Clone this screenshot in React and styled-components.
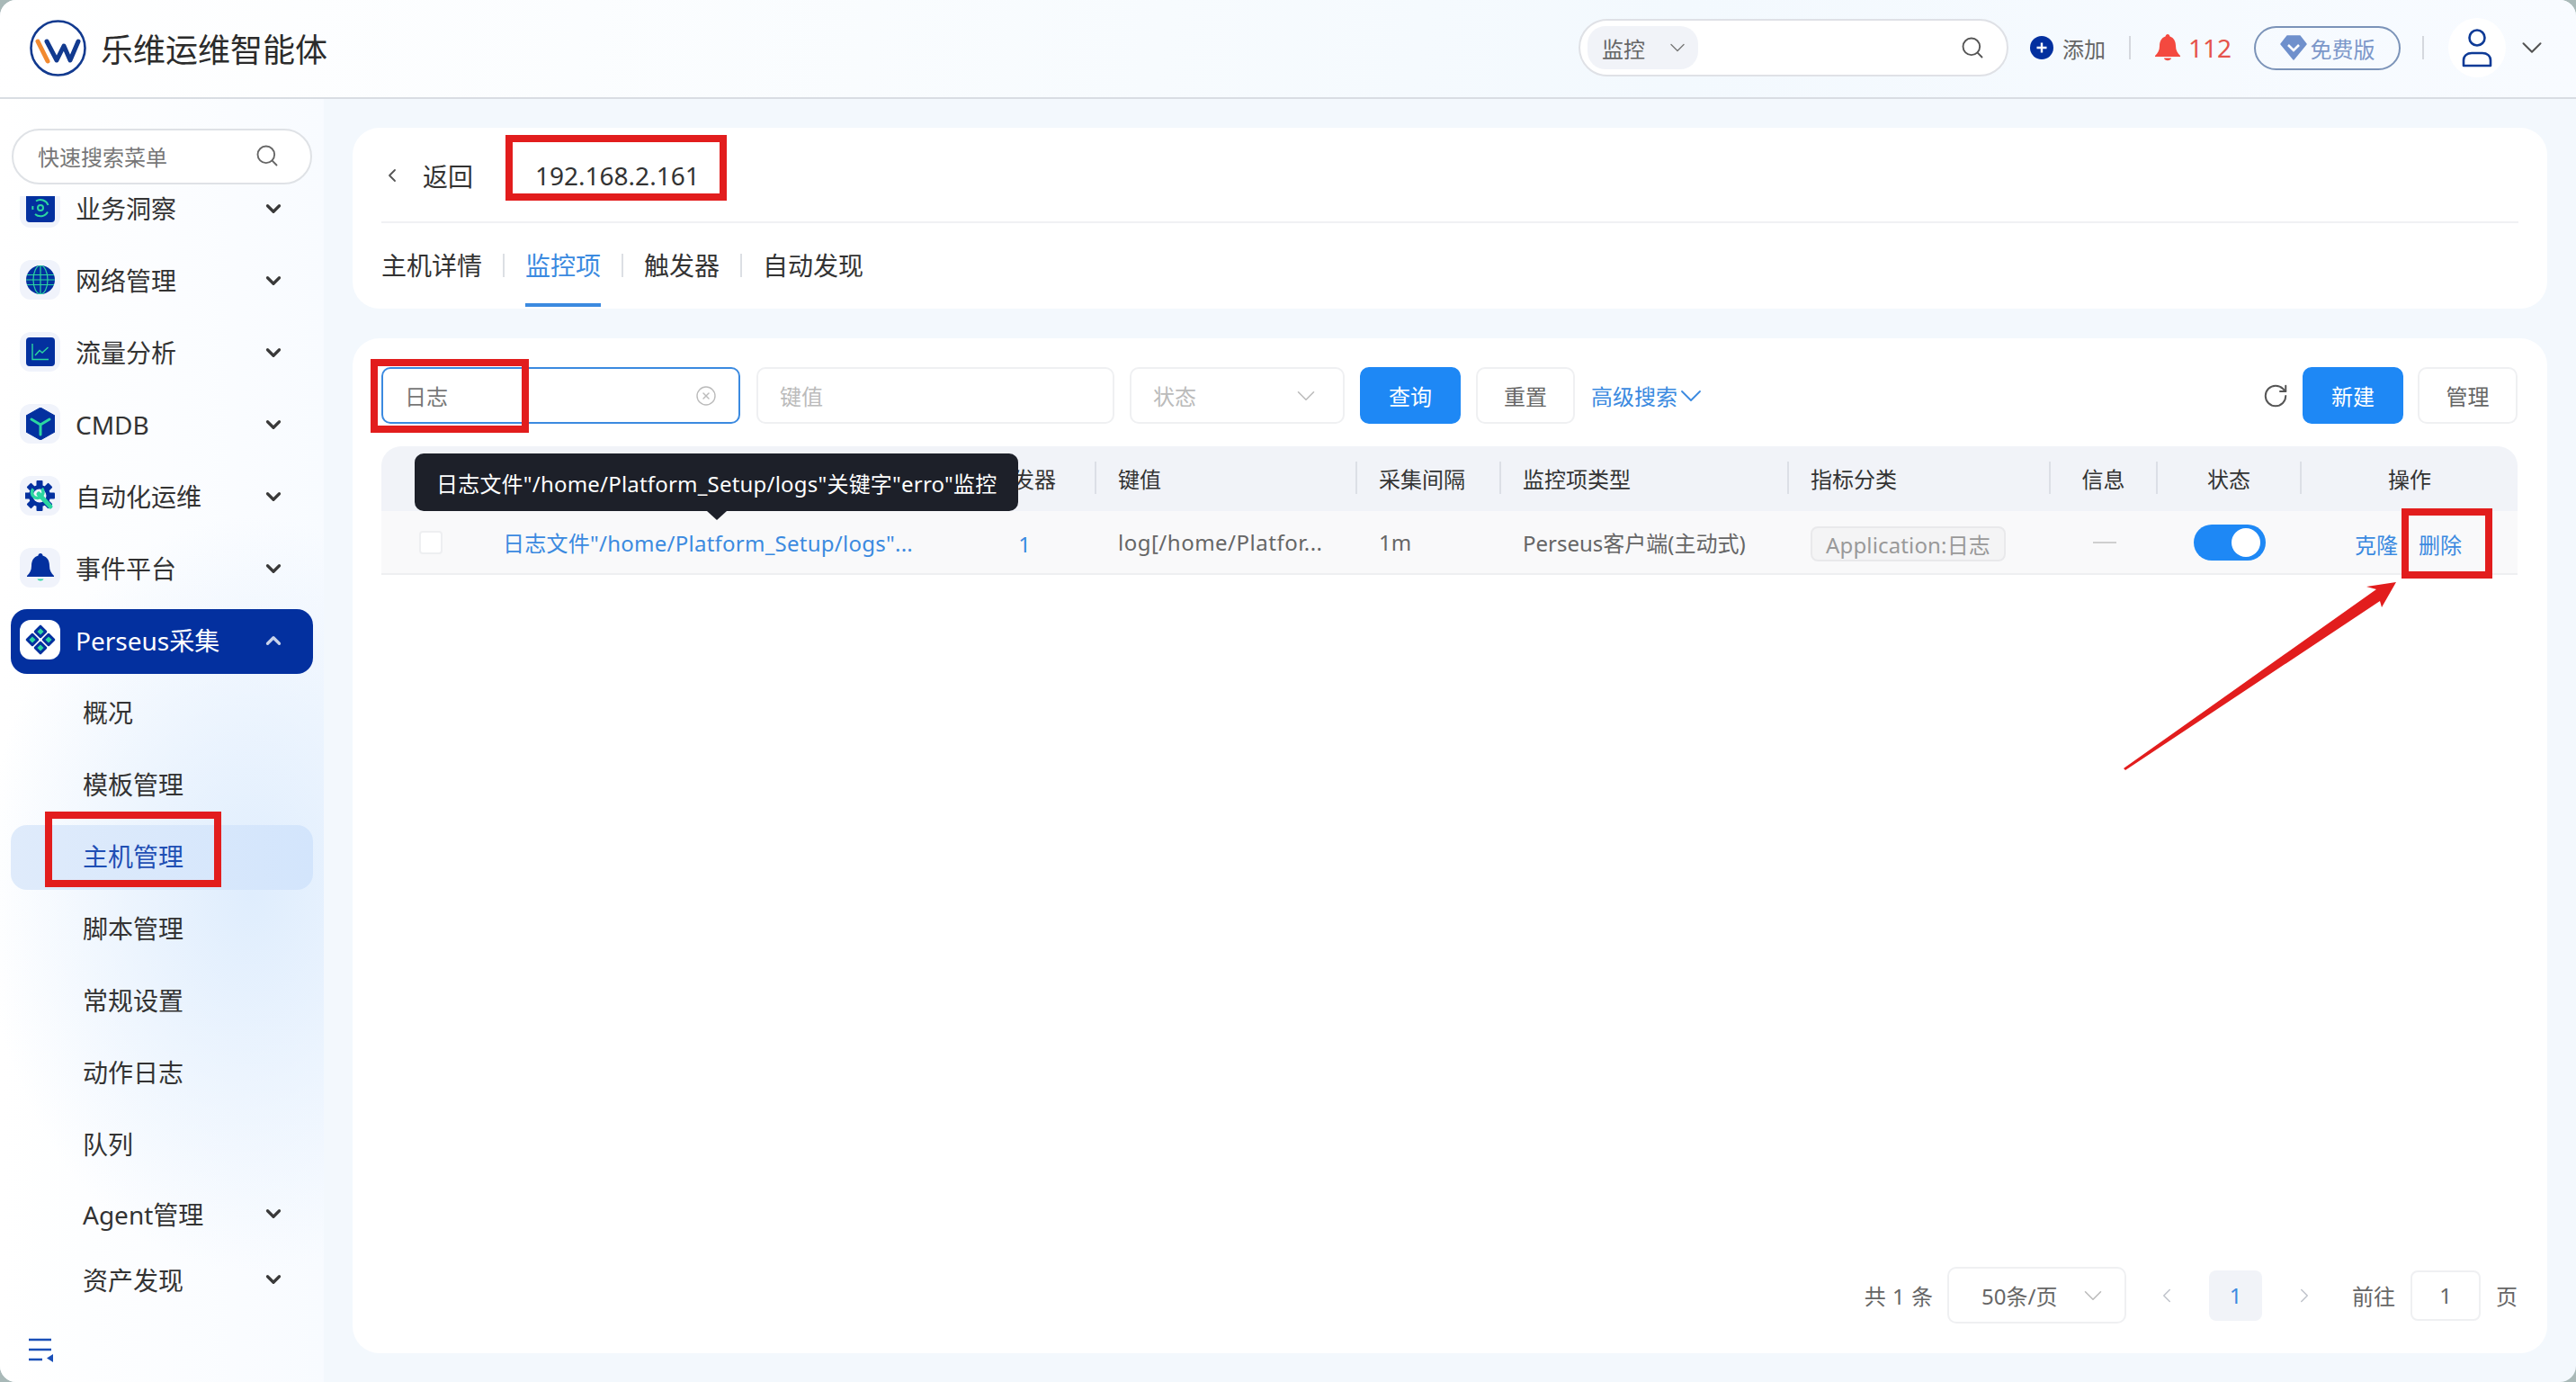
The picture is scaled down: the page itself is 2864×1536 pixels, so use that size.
import React from "react";
import styled, { createGlobalStyle } from "styled-components";
import { ChevronDown, ChevronUp, ChevronLeft, ChevronRight, Search, CircleX, RotateCw } from "lucide-react";

const NAVY = "#03309f";
const GREEN = "#2bd6a0";
const BLUE = "#1e88f5";

const Global = createGlobalStyle`
  html, body { margin: 0; padding: 0; background: #a9b9b8; }
  * { box-sizing: border-box; }
  body { font-family: "Noto Sans", "Noto Sans CJK SC", sans-serif; }
`;

const Page = styled.div`
  position: relative;
  width: 2864px;
  height: 1536px;
  display: flex;
  flex-direction: column;
  overflow: hidden;
  border-radius: 18px;
  background: #f3f8fd;
  color: #333;
`;

/* top bar */
const Header = styled.header`
  height: 110px;
  flex: none;
  display: flex;
  align-items: center;
  padding: 0 30px 2px 33px;
  border-bottom: 2px solid #d9dde3;
  background: linear-gradient(100deg, #ffffff 0%, #f7fbfe 45%, #f3f9fe 65%, #f8fbff 100%);
`;
const Brand = styled.div`
  display: flex;
  align-items: center;
  gap: 16px;
  font-size: 36px;
  color: #2b2b2b;
`;
const HeaderRight = styled.div`
  margin-left: auto;
  display: flex;
  align-items: center;
`;
const GlobalSearch = styled.div`
  width: 478px;
  height: 64px;
  display: flex;
  align-items: center;
  padding: 0 24px 0 8px;
  border: 2px solid #dfe1e6;
  border-radius: 32px;
  background: #fff;
  color: #555;
`;
const ScopePill = styled.div`
  width: 123px;
  height: 48px;
  display: flex;
  align-items: center;
  padding: 0 9px 0 16px;
  justify-content: space-between;
  border-radius: 20px;
  background: #f1f3f8;
  font-size: 24px;
  color: #666;
`;
const SearchEnd = styled.span`
  margin-left: auto;
  display: flex;
`;
const AddLink = styled.div`
  margin-left: 24px;
  display: flex;
  align-items: center;
  gap: 10px;
  font-size: 24px;
  color: #666;
`;
const VLine = styled.span`
  width: 2px;
  height: 26px;
  margin: 0 ${(p) => p.$gap || 24}px;
  background: #d5d8de;
`;
const Alarm = styled.div`
  display: flex;
  align-items: center;
  gap: 8px;
  font-size: 28px;
  color: #e5534b;
`;
const FreeBadge = styled.div`
  width: 163px;
  height: 49px;
  margin-left: 25px;
  display: flex;
  align-items: center;
  justify-content: center;
  gap: 4px;
  border: 2px solid #7b93b8;
  border-radius: 25px;
  font-size: 24px;
  color: #7c97c9;
`;
const Avatar = styled.div`
  width: 64px;
  height: 66px;
  margin-left: 3px;
  display: flex;
  align-items: center;
  justify-content: center;
  border-radius: 50%;
  background: #fff;
`;
const AvatarCaret = styled.span`
  margin-left: 10px;
  display: flex;
`;

/* layout */
const Body = styled.div`
  flex: 1;
  min-height: 0;
  display: flex;
`;
const Sidebar = styled.aside`
  width: 360px;
  flex: none;
  display: flex;
  flex-direction: column;
  padding-top: 33px;
  background:
    radial-gradient(ellipse 300px 420px at 78% 62%, #dfedfd 0%, rgba(223, 237, 253, 0) 100%),
    linear-gradient(90deg, #ffffff 0%, #f8fbff 100%);
`;
const MenuSearch = styled.div`
  width: 334px;
  height: 62px;
  flex: none;
  margin-left: 13px;
  display: flex;
  align-items: center;
  justify-content: space-between;
  padding: 0 34px 2px 27px;
  border: 2px solid #dfe2e6;
  border-radius: 31px;
  background: #fff;
  font-size: 24px;
  color: #777;
`;
const MenuViewport = styled.nav`
  flex: 1;
  min-height: 0;
  margin-top: 13px;
  overflow: hidden;
`;
const MenuList = styled.div`
  margin-top: -21px;
  padding-left: 12px;
  width: 348px;
`;
const MenuItem = styled.div`
  height: 72px;
  margin-bottom: 8px;
  display: flex;
  align-items: center;
  padding: 0 31px 3px 10px;
  border-radius: 18px;
  font-size: 28px;
  line-height: 24px;
  color: ${(p) => (p.$active ? "#fff" : "#333")};
  background: ${(p) => (p.$active ? NAVY : "transparent")};
`;
const IconTile = styled.span`
  width: 45px;
  height: 44px;
  flex: none;
  margin: -1px 17px 0 0;
  display: flex;
  align-items: center;
  justify-content: center;
  border-radius: 12px;
  background: ${(p) => (p.$white ? "#fff" : "#f0f3fb")};
`;
const MenuCaret = styled.span`
  margin-left: auto;
  display: flex;
  color: ${(p) => (p.$active ? "#c9d3ea" : "#3a3a3a")};
`;
const SubItem = styled.div`
  height: 72px;
  margin-bottom: ${(p) => p.$bottom ?? 8}px;
  display: flex;
  align-items: center;
  padding: 0 31px 5px 80px;
  border-radius: 18px;
  font-size: 28px;
  color: ${(p) => (p.$active ? "#1f4fb4" : "#333")};
  background: ${(p) => (p.$active ? "linear-gradient(90deg, #dfebfb, #d3e5fc)" : "transparent")};
`;
const SideFooter = styled.div`
  height: 66px;
  flex: none;
  padding: 17px 0 0 32px;
`;
const Main = styled.main`
  flex: 1;
  min-width: 0;
  display: flex;
  flex-direction: column;
  gap: 33px;
  padding: 32px 32px 32px;
`;

/* detail card */
const DetailCard = styled.section`
  height: 201px;
  flex: none;
  padding: 0 32px;
  border-radius: 30px;
  background: #fff;
`;
const BackRow = styled.div`
  height: 106px;
  display: flex;
  align-items: center;
  padding-top: 2px;
  border-bottom: 2px solid #f0f1f4;
  font-size: 28px;
  color: #333;
`;
const BackIcon = styled.span`
  width: 46px;
  display: flex;
  color: #555;
`;
const HostName = styled.span`
  margin-left: 69px;
  font-size: 28px;
`;
const Tabs = styled.div`
  height: 93px;
  display: flex;
  align-items: center;
`;
const Tab = styled.div`
  height: 100%;
  display: flex;
  align-items: center;
  padding-top: 3px;
  font-size: 28px;
  color: ${(p) => (p.$active ? "#3b8ae0" : "#333")};
  border-bottom: 4px solid ${(p) => (p.$active ? "#3b8ae0" : "transparent")};
`;
const TabLine = styled.span`
  width: 2px;
  height: 26px;
  margin: 0 23px;
  background: #dcdfe4;
`;

/* list card */
const ListCard = styled.section`
  flex: 1;
  min-height: 0;
  display: flex;
  flex-direction: column;
  padding: 32px 33px 33px 32px;
  border-radius: 30px;
  background: #fff;
`;
const Toolbar = styled.div`
  display: flex;
  align-items: center;
  margin-bottom: 25px;
`;
const Field = styled.div`
  width: ${(p) => p.$w}px;
  height: 63px;
  flex: none;
  margin-right: ${(p) => p.$mr ?? 18}px;
  display: flex;
  align-items: center;
  justify-content: space-between;
  padding: 0 24px 0 24px;
  border: 2px solid ${(p) => (p.$focus ? "#3b8ae0" : "#eff0f2")};
  border-radius: 10px;
  background: #fff;
  font-size: 24px;
  color: ${(p) => (p.$focus ? "#777" : "#bbb")};
`;
const Button = styled.div`
  width: ${(p) => p.$w}px;
  height: 63px;
  flex: none;
  margin-right: ${(p) => p.$mr ?? 17}px;
  display: flex;
  align-items: center;
  justify-content: center;
  border: 2px solid ${(p) => (p.$primary ? BLUE : "#eff0f2")};
  border-radius: 10px;
  background: ${(p) => (p.$primary ? BLUE : "#fff")};
  color: ${(p) => (p.$primary ? "#fff" : "#666")};
  font-size: 24px;
`;
const AdvLink = styled.div`
  display: flex;
  align-items: center;
  font-size: 24px;
  color: #3b8ae0;
  svg {
    margin-left: -5px;
  }
`;
const RefreshBtn = styled.span`
  margin-left: auto;
  margin-right: 15px;
  display: flex;
  color: #555;
`;

const Table = styled.div`
  position: relative;
  flex: 1;
  min-height: 0;
`;
const columns = "111px 524px 160px 290px 160px 320px 291px 119px 160px 240px";
const HeadRow = styled.div`
  height: 72px;
  display: grid;
  grid-template-columns: ${columns};
  align-items: center;
  padding-bottom: 2px;
  border-radius: 22px 22px 0 0;
  background: #f1f3f8;
  font-size: 24px;
  color: #333;
`;
const HeadCell = styled.div`
  height: 36px;
  display: flex;
  align-items: center;
  justify-content: ${(p) => (p.$center ? "center" : "flex-start")};
  padding-left: ${(p) => (p.$center ? 0 : 24)}px;
  border-right: ${(p) => (p.$last ? "0" : "2px solid #dcdfe6")};
`;
const DataRow = styled.div`
  height: 71px;
  display: grid;
  grid-template-columns: ${columns};
  align-items: center;
  border-bottom: 2px solid #eeeff1;
  background: #f9f9fa;
  font-size: 24px;
  color: #666;
`;
const Cell = styled.div`
  display: flex;
  align-items: center;
  justify-content: ${(p) => (p.$center ? "center" : "flex-start")};
  padding-left: ${(p) => (p.$center ? 0 : 24)}px;
  white-space: nowrap;
  letter-spacing: ${(p) => p.$spacing || 0}px;
`;
const Check = styled.span`
  width: 26px;
  height: 26px;
  margin-left: 18px;
  border: 2px solid #eeeff1;
  border-radius: 4px;
  background: #fff;
`;
const NameLink = styled.span`
  color: #3b8ae0;
  letter-spacing: 0.25px;
`;
const Count = styled.span`
  color: #3b8ae0;
  padding-top: 4px;
`;
const Tag = styled.span`
  height: 39px;
  display: flex;
  align-items: center;
  margin-top: 4px;
  padding: 0 15px;
  border: 2px solid #e9e9eb;
  border-radius: 8px;
  background: #f4f4f5;
  color: #999;
  letter-spacing: 0.15px;
`;
const Dash = styled.span`
  width: 26px;
  height: 2px;
  background: #cfcfcf;
`;
const Toggle = styled.span`
  position: relative;
  width: 80px;
  height: 40px;
  border-radius: 20px;
  background: ${BLUE};
  &::after {
    content: "";
    position: absolute;
    top: 4px;
    right: 6px;
    width: 32px;
    height: 32px;
    border-radius: 50%;
    background: #fff;
  }
`;
const Ops = styled.div`
  display: flex;
  gap: 23px;
  margin: 4px 0 0 35px;
  color: #3b8ae0;
`;
const Tooltip = styled.div`
  position: absolute;
  top: 8px;
  left: 37px;
  width: 671px;
  height: 64px;
  display: flex;
  align-items: center;
  padding-left: 24px;
  border-radius: 10px;
  background: #1d2029;
  color: #fff;
  font-size: 24px;
  letter-spacing: 0.2px;
  white-space: nowrap;
  &::after {
    content: "";
    position: absolute;
    left: 325px;
    bottom: -10px;
    border-left: 11px solid transparent;
    border-right: 11px solid transparent;
    border-top: 10px solid #1d2029;
  }
`;

/* pagination */
const Pager = styled.div`
  display: flex;
  align-items: center;
  justify-content: flex-end;
  padding-bottom: 0;
  font-size: 24px;
  word-spacing: 1px;
  color: #666;
`;
const SizeSelect = styled.div`
  width: 199px;
  height: 63px;
  margin: 0 32px 0 16px;
  display: flex;
  align-items: center;
  justify-content: space-between;
  padding: 0 18px 0 36px;
  border: 2px solid #eff0f2;
  border-radius: 10px;
`;
const PageBtn = styled.span`
  width: 59px;
  height: 56px;
  margin: 0 34px;
  display: flex;
  align-items: center;
  justify-content: center;
  border-radius: 8px;
  background: #f1f3f8;
  color: #3b8ae0;
`;
const PageArrow = styled.span`
  display: flex;
  margin-right: ${(p) => p.$mr || 0}px;
  color: #c0c4cc;
`;
const JumpBox = styled.span`
  width: 78px;
  height: 56px;
  margin: 0 17px;
  display: flex;
  align-items: center;
  justify-content: center;
  border: 2px solid #eff0f2;
  border-radius: 8px;
`;

/* red marks drawn on the screenshot */
const RedMark = styled.div`
  position: absolute;
  border: 8px solid #e21d1d;
  pointer-events: none;
`;
const HostMark = styled(RedMark)`
  left: 562px; top: 150px; width: 246px; height: 73px;
`;
const FilterMark = styled(RedMark)`
  left: 412px; top: 399px; width: 176px; height: 82px;
`;
const MenuMark = styled(RedMark)`
  left: 50px; top: 902px; width: 196px; height: 84px;
`;
const DeleteMark = styled(RedMark)`
  left: 2670px; top: 565px; width: 101px; height: 78px;
`;
const ArrowMark = styled.svg`
  position: absolute;
  left: 2355px;
  top: 640px;
  pointer-events: none;
`;

const Logo = () => (
  <svg width="63" height="63" viewBox="0 0 63 63">
    <circle cx="31.5" cy="31.5" r="30" fill="#fff" stroke="#123a8f" strokeWidth="2.6" />
    <path d="M9 24 L20 46" stroke="#f28a30" strokeWidth="5" strokeLinecap="round" fill="none" />
    <path d="M19 24 L30 45 L38 29 L45 45 L54 24" stroke="#123a8f" strokeWidth="5" strokeLinecap="round" strokeLinejoin="round" fill="none" />
  </svg>
);

const InsightIcon = () => (
  <svg width="32" height="32" viewBox="0 0 32 32">
    <rect width="32" height="32" rx="4" fill={NAVY} />
    <circle cx="16" cy="16" r="3" fill="none" stroke={GREEN} strokeWidth="2" />
    <path d="M11 8.5 A9 9 0 0 1 24.5 13 M24 20.5 A9 9 0 0 1 10 23 M7.5 18 A9 9 0 0 1 7.5 14" fill="none" stroke={GREEN} strokeWidth="2" />
  </svg>
);
const GlobeIcon = () => (
  <svg width="32" height="32" viewBox="0 0 32 32">
    <circle cx="16" cy="16" r="16" fill={NAVY} />
    <path d="M1 10.5H31M0 16H32M1 21.5H31M16 0V32" stroke={GREEN} strokeWidth="1.2" fill="none" />
    <ellipse cx="16" cy="16" rx="8" ry="16" stroke={GREEN} strokeWidth="1.2" fill="none" />
  </svg>
);
const ChartIcon = () => (
  <svg width="32" height="32" viewBox="0 0 32 32">
    <rect width="32" height="32" rx="4" fill={NAVY} />
    <path d="M7 7V24.5H25" stroke={GREEN} strokeWidth="1.4" fill="none" />
    <path d="M10 20L15 14.5L18 17L24.5 11" stroke={GREEN} strokeWidth="1.4" fill="none" />
  </svg>
);
const CubeIcon = () => (
  <svg width="32" height="36" viewBox="0 0 32 36">
    <path d="M16 0L32 9V27L16 36L0 27V9Z" fill={NAVY} stroke={NAVY} strokeWidth="1" strokeLinejoin="round" />
    <path d="M6 13L16 19L26 13M16 19V30" stroke={GREEN} strokeWidth="3" strokeLinecap="round" fill="none" />
  </svg>
);
const GearIcon = () => (
  <svg width="33" height="34" viewBox="0 0 33 34">
    <g fill={NAVY}>
      <circle cx="16" cy="17" r="12" />
      <rect x="12.5" y="0" width="7" height="34" rx="1" />
      <rect x="-1" y="13.5" width="34" height="7" rx="1" />
      <rect x="12.5" y="0" width="7" height="34" rx="1" transform="rotate(45 16 17)" />
      <rect x="12.5" y="0" width="7" height="34" rx="1" transform="rotate(-45 16 17)" />
    </g>
    <circle cx="16" cy="17" r="7.5" fill="#f0f3fb" />
    <path d="M15 15L28 29" stroke={GREEN} strokeWidth="5" strokeLinecap="round" fill="none" />
    <path d="M9 9.5A6 6 0 0 0 18 17.5A6 6 0 0 0 18.5 9" stroke={GREEN} strokeWidth="3.6" fill="none" />
  </svg>
);
const BellNavIcon = () => (
  <svg width="30" height="32" viewBox="0 0 30 32">
    <path d="M15 0C16.5 0 17.5 1 17.5 2.5C22.5 4 25 8 25 14C25 19 27 22 30 25V26H0V25C3 22 5 19 5 14C5 8 7.5 4 12.5 2.5C12.5 1 13.5 0 15 0Z" fill={NAVY} />
    <path d="M11.5 28.5H18.5C18 31 12 31 11.5 28.5Z" fill={GREEN} />
  </svg>
);
const CollectIcon = () => (
  <svg width="34" height="34" viewBox="-2 -2 40 40">
    <g transform="rotate(45 18 18)">
      <rect x="4" y="4" width="13" height="13" rx="1.5" fill={NAVY} />
      <rect x="19" y="4" width="13" height="13" rx="1.5" fill={NAVY} />
      <rect x="4" y="19" width="13" height="13" rx="1.5" fill={NAVY} />
      <rect x="19" y="19" width="13" height="13" rx="1.5" fill={NAVY} />
      <rect x="7.5" y="7.5" width="6" height="6" fill={GREEN} />
      <rect x="22.5" y="7.5" width="6" height="6" fill={GREEN} />
      <rect x="7.5" y="22.5" width="6" height="6" fill={GREEN} />
      <rect x="22.5" y="22.5" width="6" height="6" fill={GREEN} />
    </g>
  </svg>
);
const CollapseIcon = () => (
  <svg width="28" height="27" viewBox="0 0 28 27">
    <path d="M0 2H25M0 13H25M0 24H15" stroke="#1a4fb8" strokeWidth="2.6" fill="none" />
    <path d="M27 18V27L20 22.5Z" fill="#1a4fb8" />
  </svg>
);
const PlusCircle = () => (
  <svg width="26" height="26" viewBox="0 0 26 26">
    <circle cx="13" cy="13" r="13" fill={NAVY} />
    <path d="M13 7.5V18.5M7.5 13H18.5" stroke="#fff" strokeWidth="2.4" />
  </svg>
);
const RedBell = () => (
  <svg width="30" height="30" viewBox="0 0 30 30">
    <path d="M15 0C16.5 0 17 1 17.5 2.5C22 4 24 8 24 13C24 18 26 21 29 24V25H1V24C4 21 6 18 6 13C6 8 8 4 12.5 2.5C13 1 13.5 0 15 0Z" fill="#f4493f" />
    <path d="M11 26.5H19C18.5 30 11.5 30 11 26.5Z" fill="#f4493f" />
  </svg>
);
const Gem = () => (
  <svg width="30" height="28" viewBox="0 0 30 28">
    <path d="M8 1H22L29 10L15 27L1 10Z" fill="#6f90cc" stroke="#6f90cc" strokeWidth="1.5" strokeLinejoin="round" />
    <path d="M9 11L15 17L21 11" stroke="#fff" strokeWidth="2.6" fill="none" />
  </svg>
);
const UserIcon = () => (
  <svg width="34" height="44" viewBox="0 0 34 44">
    <circle cx="17" cy="11" r="8.5" fill="none" stroke="#0d3a96" strokeWidth="2.6" />
    <path d="M2 42V36C2 31 6 28 11 28H23C28 28 32 31 32 36V42Z" fill="none" stroke="#0d3a96" strokeWidth="2.6" strokeLinejoin="round" />
  </svg>
);

const caret = <ChevronDown size={26} strokeWidth={3} />;
const thin = <ChevronDown size={34} strokeWidth={1.1} color="#bbb" />;

const topMenu = [
  ["业务洞察", <InsightIcon key="a" />],
  ["网络管理", <GlobeIcon key="b" />],
  ["流量分析", <ChartIcon key="c" />],
  ["CMDB", <CubeIcon key="d" />],
  ["自动化运维", <GearIcon key="e" />],
  ["事件平台", <BellNavIcon key="f" />],
];
const subMenu = ["概况", "模板管理", "主机管理", "脚本管理", "常规设置", "动作日志"];

const App = () => {
  return (
    <>
      <Global />
      <Page>
        <Header>
          <Brand>
            <Logo />
            乐维运维智能体
          </Brand>
          <HeaderRight>
            <GlobalSearch>
              <ScopePill>
                监控
                <ChevronDown size={28} strokeWidth={1.2} color="#777" />
              </ScopePill>
              <SearchEnd>
                <Search size={28} strokeWidth={1.6} color="#555" />
              </SearchEnd>
            </GlobalSearch>
            <AddLink>
              <PlusCircle />
              添加
            </AddLink>
            <VLine $gap={26} />
            <Alarm>
              <RedBell />
              112
            </Alarm>
            <FreeBadge>
              <Gem />
              免费版
            </FreeBadge>
            <VLine $gap={24} />
            <Avatar>
              <UserIcon />
            </Avatar>
            <AvatarCaret>
              <ChevronDown size={38} strokeWidth={1.3} color="#555" />
            </AvatarCaret>
          </HeaderRight>
        </Header>
        <Body>
          <Sidebar>
            <MenuSearch>
              快速搜索菜单
              <Search size={28} strokeWidth={1.6} color="#666" />
            </MenuSearch>
            <MenuViewport>
              <MenuList>
                {topMenu.map(([label, icon]) => (
                  <MenuItem key={label}>
                    <IconTile>{icon}</IconTile>
                    {label}
                    <MenuCaret>{caret}</MenuCaret>
                  </MenuItem>
                ))}
                <MenuItem $active>
                  <IconTile $white>
                    <CollectIcon />
                  </IconTile>
                  Perseus采集
                  <MenuCaret $active>
                    <ChevronUp size={26} strokeWidth={3} />
                  </MenuCaret>
                </MenuItem>
                {subMenu.map((label) => (
                  <SubItem key={label} $active={label === "主机管理"}>
                    {label}
                  </SubItem>
                ))}
                <SubItem $bottom={6}>队列</SubItem>
                <SubItem $bottom={1}>
                  Agent管理
                  <MenuCaret>{caret}</MenuCaret>
                </SubItem>
                <SubItem>
                  资产发现
                  <MenuCaret>{caret}</MenuCaret>
                </SubItem>
              </MenuList>
            </MenuViewport>
            <SideFooter>
              <CollapseIcon />
            </SideFooter>
          </Sidebar>
          <Main>
            <DetailCard>
              <BackRow>
                <BackIcon>
                  <ChevronLeft size={24} strokeWidth={1.8} />
                </BackIcon>
                返回
                <HostName>192.168.2.161</HostName>
              </BackRow>
              <Tabs>
                <Tab>主机详情</Tab>
                <TabLine />
                <Tab $active>监控项</Tab>
                <TabLine />
                <Tab>触发器</Tab>
                <TabLine />
                <Tab>自动发现</Tab>
              </Tabs>
            </DetailCard>
            <ListCard>
              <Toolbar>
                <Field $w={399} $focus>
                  日志
                  <CircleX size={24} strokeWidth={1.4} color="#bbb" />
                </Field>
                <Field $w={398} $mr={17}>键值</Field>
                <Field $w={239} $mr={17}>
                  状态
                  {thin}
                </Field>
                <Button $w={112} $primary>查询</Button>
                <Button $w={110} $mr={18}>重置</Button>
                <AdvLink>
                  高级搜索
                  <ChevronDown size={40} strokeWidth={1.1} />
                </AdvLink>
                <RefreshBtn>
                  <RotateCw size={30} strokeWidth={1.6} />
                </RefreshBtn>
                <Button $w={112} $primary $mr={16}>新建</Button>
                <Button $w={111} $mr={0}>管理</Button>
              </Toolbar>
              <Table>
                <HeadRow>
                  <HeadCell $last />
                  <HeadCell />
                  <HeadCell $center>触发器</HeadCell>
                  <HeadCell>键值</HeadCell>
                  <HeadCell>采集间隔</HeadCell>
                  <HeadCell>监控项类型</HeadCell>
                  <HeadCell>指标分类</HeadCell>
                  <HeadCell $center>信息</HeadCell>
                  <HeadCell $center>状态</HeadCell>
                  <HeadCell $center $last>操作</HeadCell>
                </HeadRow>
                <DataRow>
                  <Cell>
                    <Check />
                  </Cell>
                  <Cell>
                    <NameLink>日志文件"/home/Platform_Setup/logs"...</NameLink>
                  </Cell>
                  <Cell $center>
                    <Count>1</Count>
                  </Cell>
                  <Cell $spacing={0.5}>log[/home/Platfor...</Cell>
                  <Cell>1m</Cell>
                  <Cell>Perseus客户端(主动式)</Cell>
                  <Cell>
                    <Tag>Application:日志</Tag>
                  </Cell>
                  <Cell $center>
                    <Dash />
                  </Cell>
                  <Cell $center>
                    <Toggle />
                  </Cell>
                  <Cell>
                    <Ops>
                      <span>克隆</span>
                      <span>删除</span>
                    </Ops>
                  </Cell>
                </DataRow>
                <Tooltip>日志文件"/home/Platform_Setup/logs"关键字"erro"监控</Tooltip>
              </Table>
              <Pager>
                共 1 条
                <SizeSelect>
                  50条/页
                  {thin}
                </SizeSelect>
                <PageArrow>
                  <ChevronLeft size={26} strokeWidth={1.4} />
                </PageArrow>
                <PageBtn>1</PageBtn>
                <PageArrow $mr={40}>
                  <ChevronRight size={26} strokeWidth={1.4} />
                </PageArrow>
                前往
                <JumpBox>1</JumpBox>页
              </Pager>
            </ListCard>
          </Main>
        </Body>
        <HostMark />
        <FilterMark />
        <MenuMark />
        <DeleteMark />
        <ArrowMark width="320" height="225" viewBox="2355 640 320 225">
          <path d="M2361 854 L2642 655 L2631 652 L2664 647 L2648 675 L2646 668 L2363 856 Z" fill="#e21d1d" />
        </ArrowMark>
      </Page>
    </>
  );
};

export default App;
